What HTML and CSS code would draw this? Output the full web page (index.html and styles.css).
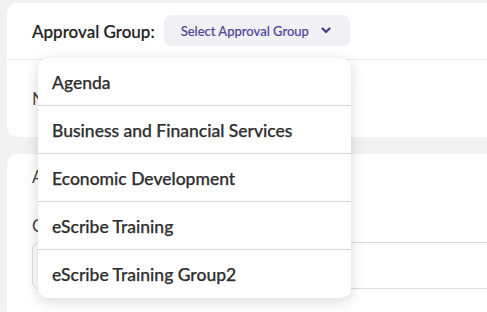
FILE: index.html
```html
<!DOCTYPE html>
<html lang="en">
<head>
    <meta charset="UTF-8">
    <meta name="viewport" content="width=device-width, initial-scale=1.0">
    <title>Approval Group</title>
    <link rel="stylesheet" href="styles.css">
</head>
<body>
    <div class="page">
        <!-- Approval group card -->
        <div class="card">
            <div class="card-header">
                <span class="label">Approval Group:</span>
                <div class="select-wrap">
                    <button class="select-button">
                        Select Approval Group
                        <svg class="chevron" width="10" height="7" viewBox="0 0 10 7">
                            <path d="M1.5 1.5 L5 5 L8.5 1.5" fill="none" stroke="#4b3c8f" stroke-width="2.2" stroke-linecap="round" stroke-linejoin="round"/>
                        </svg>
                    </button>
                </div>
            </div>
            <div class="card-body">
                <span class="field-label">Name</span>
            </div>
        </div>

        <!-- Details card -->
        <div class="card card-second">
            <div class="field-label">Agenda Item</div>
            <div class="field-label field-gap">Comments</div>
            <div class="input-box"></div>
        </div>
    </div>

    <!-- Dropdown list -->
    <ul class="dropdown">
        <li>Agenda</li>
        <li>Business and Financial Services</li>
        <li>Economic Development</li>
        <li>eScribe Training</li>
        <li>eScribe Training Group2</li>
    </ul>
</body>
</html>
```

FILE: styles.css
```css
body {
    margin: 0;
    background-color: #f2f2f2;
    font-family: Lato, "Open Sans", sans-serif;
    color: #222;
    overflow: hidden;
    height: 312px;
    position: relative;
}
.page {
    padding: 3px 0 0 7px;
}
.card {
    background-color: #fff;
    border-radius: 10px;
    margin-right: -30px;
}
.card-header {
    display: flex;
    align-items: center;
    height: 56px;
    padding-left: 25px;
    border-bottom: 1px solid #ececec;
}
.label {
    font-size: 17px;
    font-weight: 500;
    color: #1e1e1e;
    -webkit-text-stroke: 0.2px #1e1e1e;
    margin-right: 9px;
}
.select-button {
    display: flex;
    align-items: center;
    gap: 12px;
    width: 186px;
    height: 31px;
    padding: 0 0 0 17px;
    border: none;
    border-radius: 7px;
    background-color: #f1f0f5;
    color: #54469a;
    font-family: Lato, sans-serif;
    font-size: 13px;
    font-weight: 500;
    -webkit-text-stroke: 0.15px #54469a;
    margin-top: -1px;
}
.card-body {
    height: 77px;
    padding-left: 25px;
    display: flex;
    align-items: center;
}
.field-label {
    font-size: 17px;
    color: #444;
}
.card-second {
    margin-top: 17px;
    padding: 12px 0 30px 25px;
}
.field-gap {
    margin-top: 28px;
}
.input-box {
    height: 45px;
    margin-top: 6px;
    border: 1px solid #ddd;
    border-radius: 7px;
}
.dropdown {
    position: absolute;
    left: 38px;
    top: 58px;
    width: 313px;
    margin: 0;
    padding: 0;
    list-style: none;
    background-color: #fff;
    border-radius: 10px;
    box-shadow: 0 3px 14px rgba(0, 0, 0, 0.16);
}
.dropdown li {
    height: 46px;
    padding: 1px 0 0 14px;
    display: flex;
    align-items: center;
    font-size: 17.5px;
    font-weight: 500;
    color: #2e2e2e;
    -webkit-text-stroke: 0.25px #2e2e2e;
    border-bottom: 1px solid #d4d4d4;
}
.dropdown li:last-child {
    border-bottom: none;
    height: 47px;
}
```
